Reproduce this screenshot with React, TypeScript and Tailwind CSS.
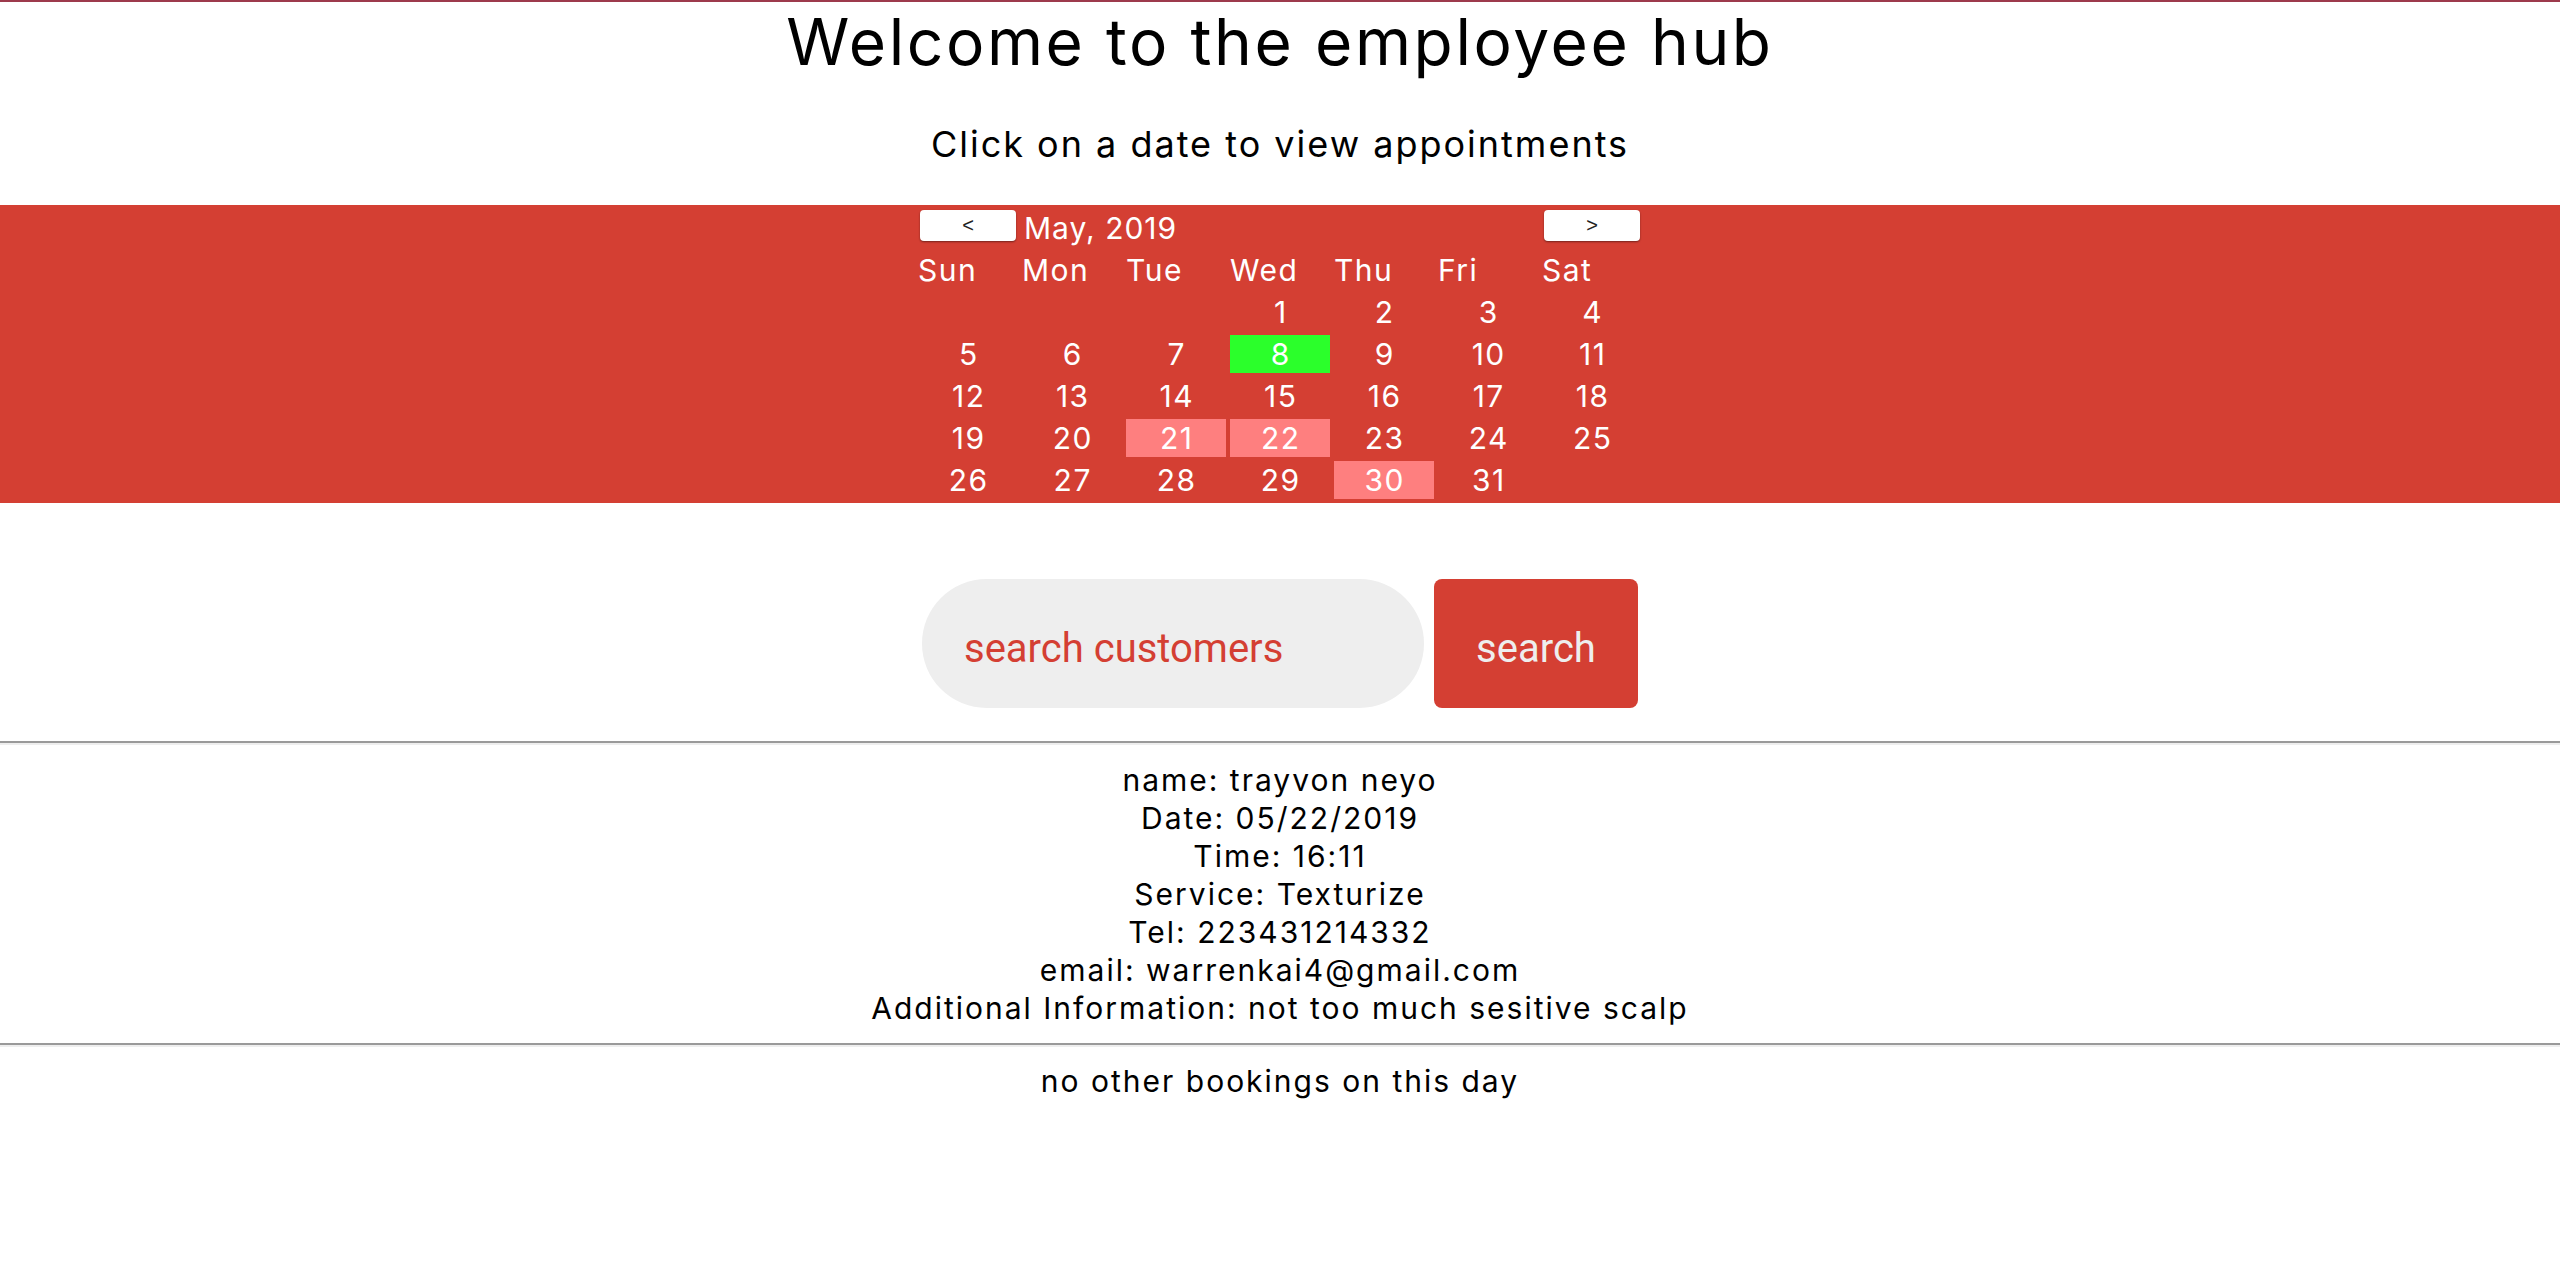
import React from "react";

const font = { fontFamily: "Inter, 'Noto Sans', sans-serif" };

export default function App() {
  const weekdays = ["Sun", "Mon", "Tue", "Wed", "Thu", "Fri", "Sat"];
  const cells: (number | null)[] = [null, null, null];
  for (let d = 1; d <= 31; d++) cells.push(d);
  while (cells.length < 35) cells.push(null);
  const pink = [21, 22, 30];

  const details = [
    "name: trayvon neyo",
    "Date: 05/22/2019",
    "Time: 16:11",
    "Service: Texturize",
    "Tel: 223431214332",
    "email: warrenkai4@gmail.com",
    "Additional Information: not too much sesitive scalp",
  ];

  return (
    <div className="min-h-[1278px] w-full bg-white text-black" style={font}>
      <div className="h-[2px] w-full bg-[#9d3a4c]" />
      <h1 className="mt-[8px] text-center text-[64px] leading-[64px] font-normal tracking-[2.6px]">
        Welcome to the employee hub
      </h1>
      <h3 className="mt-[50px] text-center text-[36px] leading-[40px] font-normal tracking-[2px]">
        Click on a date to view appointments
      </h3>

      <div className="mt-[41px] w-full bg-[#d43f33] text-white">
        <div className="mx-auto grid w-[732px] grid-cols-[repeat(7,100px)] auto-rows-[38px] gap-[4px] p-[4px] text-[30px] leading-[38px] tracking-[1.5px]">
          <div className="flex justify-center">
            <button
              className="mt-[1px] h-[31px] w-[96px] rounded-[4px] bg-white text-[20px] leading-[31px] tracking-normal text-[#222] shadow-[0_1px_2px_rgba(0,0,0,0.45)]"
              style={{ fontFamily: "'Liberation Sans', Arial, sans-serif" }}
            >
              &lt;
            </button>
          </div>
          <div className="col-span-5 pl-[2px] tracking-[1px]">May, 2019</div>
          <div className="flex justify-center">
            <button
              className="mt-[1px] h-[31px] w-[96px] rounded-[4px] bg-white text-[20px] leading-[31px] tracking-normal text-[#222] shadow-[0_1px_2px_rgba(0,0,0,0.45)]"
              style={{ fontFamily: "'Liberation Sans', Arial, sans-serif" }}
            >
              &gt;
            </button>
          </div>
          {weekdays.map((w) => (
            <div key={w} className="text-left">
              {w}
            </div>
          ))}
          {cells.map((d, i) => {
            let bg = "";
            if (d === 8) bg = "bg-[#2bff2b]";
            else if (d !== null && pink.includes(d)) bg = "bg-[#fe7f7f]";
            return (
              <div key={i} className={`pl-[1.5px] text-center ${bg}`}>
                {d ?? ""}
              </div>
            );
          })}
        </div>
      </div>

      <div className="mt-[76px] flex justify-center gap-[10px]">
        <input
          type="text"
          placeholder="search customers"
          className="h-[129px] w-[502px] rounded-full bg-[#eeeeee] pl-[42px] pt-[10px] text-[40px] text-[#d43f33] outline-none placeholder:text-[#d43f33]"
          style={{ fontFamily: "Roboto, 'Liberation Sans', sans-serif" }}
        />
        <button
          className="h-[129px] w-[204px] rounded-[8px] bg-[#d43f33] pt-[10px] text-[40px] text-[#eeeeee]"
          style={{ fontFamily: "Roboto, 'Liberation Sans', sans-serif" }}
        >
          search
        </button>
      </div>

      <div className="mt-[33px] w-full border-t-2 border-b-2 border-t-[#9a9a9a] border-b-[#eeeeee]" />

      <div className="mt-[16px] text-center text-[30px] leading-[38px] tracking-[2px]">
        {details.map((l) => (
          <div key={l}>{l}</div>
        ))}
      </div>

      <div className="mt-[16px] w-full border-t-2 border-b-2 border-t-[#9a9a9a] border-b-[#eeeeee]" />

      <div className="mt-[15px] text-center text-[30px] leading-[38px] tracking-[2px]">
        no other bookings on this day
      </div>
    </div>
  );
}
